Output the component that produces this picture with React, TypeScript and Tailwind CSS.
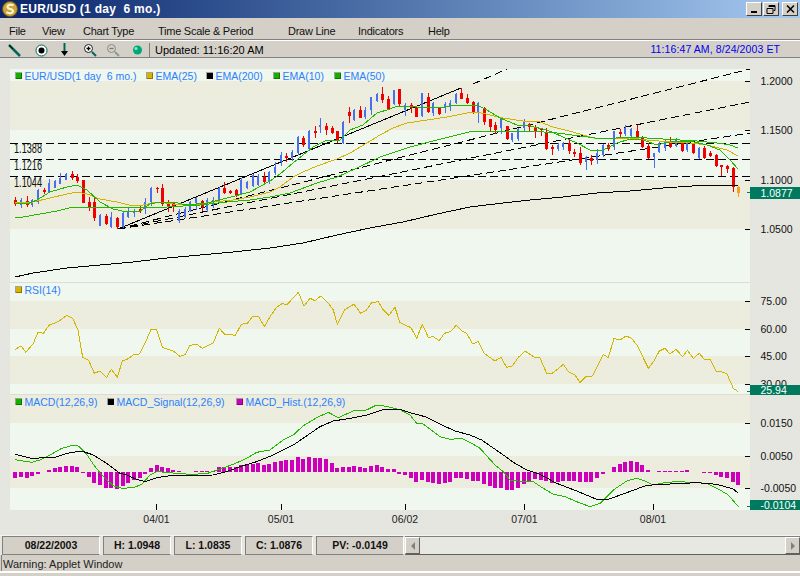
type Pt = [number, number];
type Candle = [string, number, number, number, number];

const toPoints = (pts: Pt[], ox = 0, oy = 0, div = 1) =>
  pts.map(([x, y]) => `${ox + x / div},${oy + y / div}`).join(" ");

const candleX = (i: number) => 15.3 + 5.648 * i;

const ema25: Pt[] = [[15,202],[33,202],[50,198],[67,194],[77,192],[87,194],[100,199],[117,202],[133,206],[143,205],[157,202],[173,204],[200,204],[213,202],[233,200],[250,197],[270,192],[280,187],[293,177],[303,172],[317,166],[337,159],[350,153],[367,143],[380,135],[393,128],[407,123],[427,120],[447,117],[467,113],[477,112],[490,115],[503,118],[523,121],[540,122],[553,127],[573,132],[597,139],[630,138],[647,140],[670,142],[690,143],[707,145],[727,150],[738,156]];
const ema10: Pt[] = [[15,203],[27,204],[37,200],[50,192],[67,187],[77,185],[87,190],[100,202],[113,209],[127,212],[140,211],[150,204],[160,202],[173,202],[187,205],[207,203],[227,198],[250,192],[270,181],[280,174],[293,163],[303,155],[313,147],[327,140],[340,140],[350,130],[363,125],[377,113],[390,109],[397,106],[417,107],[437,108],[457,105],[477,105],[487,110],[500,118],[517,125],[530,126],[547,130],[563,137],[577,143],[590,150],[603,150],[617,143],[630,139],[643,140],[657,145],[670,142],[690,141],[707,145],[720,150],[730,160],[738,169]];
const ema50: Pt[] = [[15,217],[23,217],[40,214],[57,211],[73,207],[100,207],[133,207],[167,207],[200,205],[227,202],[250,200],[270,197],[290,193],[317,183],[337,177],[357,168],[380,157],[410,147],[437,140],[457,135],[473,131],[503,131],[530,131],[557,133],[580,136],[603,139],[630,137],[663,139],[697,141],[717,143],[730,145],[738,148]];
const ema200: Pt[] = [[15,277],[33,273],[67,268],[100,265],[133,262],[167,258],[200,255],[233,252],[270,248],[303,243],[337,235],[370,228],[403,222],[437,214],[470,207],[503,203],[530,200],[563,197],[597,193],[630,191],[663,188],[707,185],[738,186]];

const rsiA: Pt[] = [[46,208],[63,198],[78,217],[100,190],[114,157],[130,160],[148,135],[175,125],[200,106],[218,115],[234,150],[248,232],[266,241],[283,280],[300,273],[320,292],[334,268],[352,292],[367,243],[385,236],[403,222],[418,222],[435,190],[453,148],[469,148],[487,202],[520,213],[540,229],[556,224],[570,196],[589,192],[607,205],[640,188],[658,145],[673,162],[706,166],[724,133],[742,130],[757,110],[775,108],[793,140],[810,110],[830,82],[848,70],[860,75],[895,37],[912,78],[930,55],[945,62],[962,48],[985,70],[1000,90],[1012,133],[1033,90],[1062,72],[1082,100],[1098,92],[1115,68],[1135,65],[1150,90],[1167,106],[1185,82],[1200,128]];
const rsiB: Pt[] = [[0,128],[33,143],[50,175],[67,133],[85,172],[100,170],[118,182],[133,160],[152,155],[168,136],[185,152],[200,160],[218,192],[235,184],[252,220],[285,243],[303,232],[320,262],[337,258],[355,232],[375,213],[405,233],[420,234],[440,280],[455,281],[470,270],[490,253],[505,275],[525,285],[540,307],[560,288],[577,288],[610,223],[625,233],[642,175],[660,180],[678,168],[695,175],[712,197],[745,265],[762,243],[778,213],[795,205],[810,222],[828,208],[848,230],[862,211],[880,235],[898,220],[912,237],[930,238],[948,273],[965,276],[980,280],[1000,325],[1015,335]];

const macdA: Pt[] = [[46,194],[70,198],[95,202],[120,195],[150,180],[185,160],[215,152],[235,153],[260,178],[285,215],[310,245],[340,272],[365,280],[400,278],[425,268],[450,240],[470,230],[500,232],[530,235],[570,238],[620,236],[660,222],[700,208],[740,190],[770,172],[810,165],[850,135],[880,120],[910,92],[950,68],[985,52],[1015,68],[1060,48],[1095,47],[1130,30],[1160,34],[1200,44]];
const macdB: Pt[] = [[0,44],[30,60],[50,85],[70,87],[120,125],[150,133],[185,130],[210,142],[240,160],[285,210],[310,230],[330,255],[355,258],[400,260],[430,280],[460,298],[495,305],[530,320],[570,335],[600,325],[640,285],[680,258],[710,250],[740,260],[760,270],[800,262],[830,260],[880,262],[920,265],[960,285],[985,300],[1015,335]];
const signalA: Pt[] = [[46,178],[95,190],[165,187],[200,175],[245,168],[280,180],[320,205],[360,235],[380,240],[410,253],[435,260],[470,248],[510,242],[640,240],[680,230],[720,215],[770,200],[820,180],[880,150],[960,95],[1000,78],[1050,70],[1100,60],[1145,45],[1200,42]];
const signalB: Pt[] = [[0,43],[30,53],[75,65],[130,92],[165,108],[210,120],[245,135],[310,180],[340,202],[380,225],[420,238],[470,265],[530,288],[590,313],[625,313],[680,293],[740,271],[790,268],[890,263],[950,268],[1000,282],[1015,295]];

// histogram, in thirds of a pixel from the zero line, one per candle
const hist = [-16,-14,-17,-11,-5,0,6,13,17,19,18,16,-2,-14,-32,-38,-46,-46,-50,-40,-32,-23,-18,-5,14,21,15,12,6,3,0,0,3,3,3,4,15,15,15,15,21,21,25,27,22,24,31,34,36,36,45,39,45,42,42,39,27,12,15,15,18,16,12,18,21,15,9,9,-5,-8,-16,-28,-23,-28,-32,-35,-32,-29,-18,-18,-20,-26,-26,-35,-41,-47,-47,-53,-53,-48,-35,-26,-20,-23,-26,-32,-30,-26,-26,-26,-29,-29,-29,-17,-4,0,16,25,31,34,31,22,6,0,3,4,4,4,3,6,0,0,-2,-2,-8,-13,-16,-29,-38];

const candlesA: Candle[] = [
  ["r",335,345,357,362],["b",338,345,360,368],["r",333,348,360,365],["b",342,345,360,365],["b",312,314,350,357],["r",308,315,322,328],["b",282,295,320,323],["b",285,287,308,310],["b",264,280,296,298],["b",265,267,284,286],["r",258,268,278,285],["r",267,275,288,294],["r",285,285,353,353],["r",336,352,365,378],["r",335,352,398,407],["b",388,390,422,424],["r",387,393,416,420],["b",382,395,425,428],["r",395,398,426,433],["b",382,385,425,430],["b",368,378,395,398],["b",372,378,385,395],["r",362,372,378,385],["b",340,350,372,388],["b",305,308,352,362],["r",305,308,312,325],["r",297,310,358,363],["r",345,353,365,380],["r",350,355,365,380],["b",372,378,408,415],["b",365,372,395,400],["b",348,352,378,382],["b",335,340,355,375],["r",345,348,365,378],["b",340,345,375,380],["b",336,345,360,370],["b",305,310,348,352],["r",292,308,325,328],["r",316,319,323,328],["r",312,316,330,335],["b",280,285,328,330],["b",288,290,310,312],["b",266,270,302,305],["b",268,272,300,302],["r",262,275,292,296],["b",258,262,290,298],
];
const candlesB: Candle[] = [
  ["b",305,320,340,345],["b",275,285,305,318],["r",280,288,295,305],["b",270,275,295,302],["b",228,232,280,285],["r",228,235,255,262],["b",210,213,268,272],["r",198,212,218,235],["b",175,195,200,218],["r",190,198,210,225],["r",198,205,218,222],["r",212,212,240,250],["b",183,186,248,252],["r",140,155,168,188],["b",148,150,180,183],["r",138,150,175,175],["b",142,150,172,178],["b",110,110,150,165],["b",100,102,122,125],["r",82,102,120,128],["r",108,118,150,150],["b",90,90,132,135],["r",88,88,132,140],["b",128,135,150,168],["r",128,135,145,160],["r",140,142,172,172],["b",98,100,168,172],["r",98,112,155,158],["b",125,130,160,168],["r",140,145,162,165],["b",125,132,145,158],["b",120,128,142,152],["b",100,102,130,132],["r",85,98,118,118],["r",102,115,130,132],["r",122,125,158,162],["b",125,128,160,190],["r",142,145,185,195],["r",178,178,200,212],["r",185,195,210,222],["b",170,172,205,222],["r",198,198,238,240],["b",218,220,240,245],["b",205,208,238,242],["b",178,182,205,212],["r",188,193,200,215],
];
const candlesC: Candle[] = [
  ["r",195,200,212,235],["r",205,205,210,228],["r",205,215,268,270],["r",255,262,268,285],["b",250,256,266,272],["b",245,248,262,270],["r",238,248,272,282],["r",268,275,282,290],["r",260,280,310,315],["b",288,292,305,330],["r",285,295,302,315],["b",268,280,300,312],["b",252,255,285,290],["r",250,255,268,272],["b",212,214,262,270],["r",208,215,222,235],["b",195,205,222,228],["b",205,208,228,232],["r",195,212,235,240],["r",228,230,262,265],["r",250,258,295,298],["b",278,280,290,325],["b",245,250,275,280],["b",240,245,265,272],["r",232,245,262,265],["b",235,240,258,262],["r",245,250,272,275],["b",245,250,270,275],["r",250,252,280,282],["b",260,265,295,298],["r",258,265,295,298],["r",272,278,288,290],["r",282,285,318,322],["r",315,315,320,348],["r",315,318,326,338],["r",322,323,382,395],["o",378,380,400,410],
];

const candles = [
  ...candlesA.map((c) => ({ c, oy: 85 })),
  ...candlesB.map((c) => ({ c, oy: 60 })),
  ...candlesC.map((c) => ({ c, oy: 60 })),
];

const candleColor: Record<string, string> = { r: "#f00000", b: "#4a6ef0", o: "#f4a020" };

const bands: [number, number][] = [[81,130],[180,229],[301,329],[356,384],[394,423],[456,488]];
const lights: [number, number][] = [[69,81],[130,180],[229,282],[283,301],[329,356],[384,394],[423,456],[488,510]];

const axisLabels: [string, number][] = [
  ["1.2000",81],["1.1500",130],["1.1000",180],["1.0500",229],
  ["75.00",301],["60.00",329],["45.00",356],["30.00",384],
  ["0.0150",423],["0.0050",456],["-0.0050",488],
];

const dateTicks: [string, number][] = [["04/01",156.5],["05/01",281],["06/02",405],["07/01",524.5],["08/01",653]];

const tags: [string, number, number, number][] = [["1.0877",187,12,192],["25.94",385,10,391],["-0.0104",500,10,506]];

const legends: { x: number; y: number; color: string; label: string }[] = [
  { x: 15, y: 72, color: "#14b000", label: "EUR/USD(1 day  6 mo.)" },
  { x: 146, y: 72, color: "#d8b400", label: "EMA(25)" },
  { x: 206, y: 72, color: "#000000", label: "EMA(200)" },
  { x: 273, y: 72, color: "#14b000", label: "EMA(10)" },
  { x: 334, y: 72, color: "#14b000", label: "EMA(50)" },
  { x: 15, y: 286, color: "#d8b400", label: "RSI(14)" },
  { x: 15, y: 398, color: "#14b000", label: "MACD(12,26,9)" },
  { x: 107, y: 398, color: "#000000", label: "MACD_Signal(12,26,9)" },
  { x: 236, y: 398, color: "#cc00bb", label: "MACD_Hist.(12,26,9)" },
];

const fan: [number, number, number, number][] = [
  [473,84,507,69],
  [118,229,750,69],
  [118,229,750,102],
  [118,229,750,133],
];

function Chart() {
  return (
    <svg width={800} height={477} viewBox="0 58 800 477" className="block" xmlSpace="preserve">
      <defs>
        <pattern id="tan" width={2} height={2} patternUnits="userSpaceOnUse">
          <rect width={2} height={2} fill="#eeeee0" />
          <rect width={1} height={1} fill="#ebebdc" />
          <rect x={1} y={1} width={1} height={1} fill="#ebebdc" />
        </pattern>
        <pattern id="gutter" width={2} height={2} patternUnits="userSpaceOnUse">
          <rect width={2} height={2} fill="#e8e8e3" />
          <rect width={1} height={1} fill="#e3e3dd" />
          <rect x={1} y={1} width={1} height={1} fill="#e3e3dd" />
        </pattern>
      </defs>
      <rect x={0} y={58} width={800} height={477} fill="url(#gutter)" />
      <g shapeRendering="crispEdges">
        {lights.map(([a, b]) => (
          <rect key={a} x={10} y={a} width={740} height={b - a} fill="#f0f7ee" />
        ))}
        {bands.map(([a, b]) => (
          <rect key={a} x={10} y={a} width={740} height={b - a} fill="url(#tan)" />
        ))}
        <rect x={10} y={282} width={740} height={1} fill="#dcdcd8" />
        <rect x={10} y={394} width={740} height={1} fill="#dcdcd8" />
        {axisLabels.map(([, y]) => (
          <rect key={y} x={745} y={y} width={5} height={1} fill="#000" />
        ))}
        {dateTicks.map(([d, x]) => (
          <rect key={d} x={Math.floor(x)} y={504} width={1} height={6} fill="#000" />
        ))}
      </g>

      {hist.map((h, i) =>
        h === 0 ? null : (
          <rect
            key={i}
            x={Math.round(candleX(i)) - 2}
            y={h > 0 ? 472.3 - h / 3 : 472.3}
            width={4}
            height={Math.abs(h) / 3}
            fill="#cc00bb"
            shapeRendering="crispEdges"
          />
        ),
      )}

      <g fill="none" stroke="#000" strokeWidth={1} shapeRendering="crispEdges">
        {[143, 159.5, 176.5].map((y) => (
          <line key={y} x1={10} y1={y} x2={750} y2={y} strokeDasharray="8 4" />
        ))}
        {fan.map(([x1, y1, x2, y2]) => (
          <line key={`${x2}-${y2}`} x1={x1} y1={y1} x2={x2} y2={y2} strokeDasharray="8 4" />
        ))}
        <line x1={118} y1={229} x2={461} y2={88} />
      </g>

      <g fontSize={14} fill="#111">
        <text x={14} y={153} textLength={28} lengthAdjust="spacingAndGlyphs">1.1388</text>
        <text x={14} y={170} textLength={28} lengthAdjust="spacingAndGlyphs">1.1216</text>
        <text x={14} y={187} textLength={28} lengthAdjust="spacingAndGlyphs">1.1044</text>
      </g>

      {candles.map(({ c: [k, wt, bt, bb, wb], oy }, i) => {
        const x = Math.round(candleX(i));
        const w = k === "b" ? 2 : 3;
        return (
          <g key={i} fill={candleColor[k]} shapeRendering="crispEdges">
            <rect x={x} y={oy + wt / 3} width={1} height={(wb - wt) / 3} />
            <rect x={x - 1} y={oy + bt / 3} width={w} height={(bb - bt) / 3} />
          </g>
        );
      })}

      <g fill="none" strokeLinejoin="round" strokeWidth={1} shapeRendering="crispEdges">
        <polyline points={toPoints(ema200)} stroke="#000" />
        <polyline points={toPoints(ema25)} stroke="#d4b000" />
        <polyline points={toPoints(ema50)} stroke="#22b800" />
        <polyline points={toPoints(ema10)} stroke="#22b800" />
        <polyline points={toPoints(rsiA, 0, 280, 3)} stroke="#d0b400" />
        <polyline points={toPoints(rsiB, 400, 280, 3)} stroke="#d0b400" />
        <polyline points={toPoints(macdA, 0, 395, 3)} stroke="#22b800" />
        <polyline points={toPoints(macdB, 400, 395, 3)} stroke="#22b800" />
        <polyline points={toPoints(signalA, 0, 395, 3)} stroke="#000" />
        <polyline points={toPoints(signalB, 400, 395, 3)} stroke="#000" />
      </g>

      <g fontSize={10.5} fill="#111">
        {axisLabels.map(([t, y]) => (
          <text key={t} x={760.5} y={y + 4}>{t}</text>
        ))}
        {dateTicks.map(([d, x]) => (
          <text key={d} x={x} y={523} textAnchor="middle" fill="#222">{d}</text>
        ))}
      </g>

      {tags.map(([t, y, h, tick]) => (
        <g key={t}>
          <rect x={747} y={tick} width={3} height={1} fill="#007a5e" shapeRendering="crispEdges" />
          <rect x={750} y={y} width={50} height={h} fill="#007a5e" shapeRendering="crispEdges" />
          <text x={760.5} y={y + h / 2 + 4} fontSize={10.5} fill="#fff">{t}</text>
        </g>
      ))}

      {legends.map((l) => (
        <g key={l.label}>
          <rect x={l.x + 0.5} y={l.y + 0.5} width={6} height={6} fill={l.color} stroke="#00000055" shapeRendering="crispEdges" />
          <text x={l.x + 9.5} y={l.y + 7.5} fontSize={10.5} fill="#2a80ff" style={{ whiteSpace: "pre" }}>{l.label}</text>
        </g>
      ))}
    </svg>
  );
}

function WinButton({ children }: { children: React.ReactNode }) {
  return (
    <div className="w-4 h-[14px] bg-[#d4d0c8] border border-t-white border-l-white border-r-[#404040] border-b-[#404040] flex items-center justify-center">
      {children}
    </div>
  );
}

function Logo() {
  return (
    <svg width={16} height={16} viewBox="0 0 16 16">
      <circle cx={8} cy={8} r={7.5} fill="#caa63c" stroke="#6a5418" strokeWidth={1} />
      <path d="M11.5 4.5c-2-1.500-6-1-6 1.500s5.500 1.500 5.500 4-4 2.800-6.500 1.200" fill="none" stroke="#fff6d0" strokeWidth={2} />
    </svg>
  );
}

function ToolIcon({ className, children }: { className?: string; children: React.ReactNode }) {
  return <div className={`w-[17px] h-[17px] flex items-center justify-center ${className ?? ""}`}>{children}</div>;
}

const menuItems: [string, string][] = [
  ["File", "w-[33px]"],
  ["View", "w-[41px]"],
  ["Chart Type", "w-[75px]"],
  ["Time Scale & Period", "w-[130px]"],
  ["Draw Line", "w-[70px]"],
  ["Indicators", "w-[70px]"],
  ["Help", "w-[40px]"],
];

const statusCells: [string, string][] = [
  ["08/22/2003", "w-[98px]"],
  ["H: 1.0948", "w-[68px]"],
  ["L: 1.0835", "w-[68px]"],
  ["C: 1.0876", "w-[68px]"],
  ["PV: -0.0149", "w-[88px]"],
];

export default function App() {
  return (
    <div className="w-[800px] h-[576px] overflow-hidden flex flex-col bg-[#d4d0c8] text-black font-['Liberation_Sans',Arial,sans-serif]">
      {/* title bar */}
      <div className="h-[18px] shrink-0 flex items-center bg-gradient-to-r from-[#0a246a] to-[#a6caf0] px-[2px]">
        <Logo />
        <span className="ml-[2px] text-white font-bold text-[12px] tracking-[0.3px] whitespace-pre">EUR/USD (1 day  6 mo.)</span>
        <div className="ml-auto flex items-center gap-[1px]">
          <WinButton><div className="w-[6px] h-[2px] bg-black mt-[6px] mr-[1px]" /></WinButton>
          <WinButton>
            <svg width={10} height={9} viewBox="0 0 10 9" fill="none" stroke="#000">
              <path d="M3 2V.5h6v5H7.500M1 3.500h6v5H1zM1 3.500h6" />
              <path d="M3 1.500h6" />
            </svg>
          </WinButton>
          <div className="w-[1px]" />
          <WinButton>
            <svg width={9} height={8} viewBox="0 0 9 8" stroke="#000" strokeWidth={1.500}>
              <path d="M1 .5l7 7M8 .5l-7 7" />
            </svg>
          </WinButton>
        </div>
      </div>

      {/* menu */}
      <div className="h-[21px] shrink-0 flex items-center pl-[9px] pt-[5px] text-[11px] tracking-[-0.25px] text-[#111]">
        {menuItems.map(([m, w]) => (
          <span key={m} className={`${w} whitespace-nowrap`}>{m}</span>
        ))}
      </div>
      <div className="h-px shrink-0 bg-[#808080]" />
      <div className="h-px shrink-0 bg-white" />

      {/* toolbar */}
      <div className="h-[16px] shrink-0 flex items-center pl-[6px] pr-[20px] pt-[2px] text-[11px]">
        <ToolIcon>
          <svg width={13} height={13} viewBox="0 0 13 13"><path d="M1 1l11 11" stroke="#006858" strokeWidth={2.500} /><path d="M1 1l4 4" stroke="#000" strokeWidth={1} /></svg>
        </ToolIcon>
        <ToolIcon className="ml-[10px]">
          <svg width={13} height={13} viewBox="0 0 13 13"><circle cx={6.500} cy={6.500} r={5.500} fill="#fff" stroke="#006858" /><circle cx={6.500} cy={6.500} r={3} fill="#000" /></svg>
        </ToolIcon>
        <ToolIcon className="ml-[6px]">
          <svg width={9} height={14} viewBox="0 0 9 14"><path d="M3.500 0h2v9h-2z" fill="#006858" /><path d="M1 8h7l-3.500 5z" fill="#000" /></svg>
        </ToolIcon>
        <ToolIcon className="ml-[8px]">
          <svg width={14} height={14} viewBox="0 0 14 14" fill="none"><circle cx={5.500} cy={5.500} r={4} fill="#fff" stroke="#222" /><path d="M3.500 5.500h4M5.500 3.500v4" stroke="#000" strokeWidth={1.300} /><path d="M9 9l4 4" stroke="#006858" strokeWidth={2} /></svg>
        </ToolIcon>
        <ToolIcon className="ml-[6px]">
          <svg width={14} height={14} viewBox="0 0 14 14" fill="none"><circle cx={5.500} cy={5.500} r={4} stroke="#8a8a84" /><path d="M3.500 5.500h4" stroke="#777" strokeWidth={1.300} /><path d="M9 9l4 4" stroke="#8a9a94" strokeWidth={2} /></svg>
        </ToolIcon>
        <ToolIcon className="ml-[8px]">
          <svg width={11} height={11} viewBox="0 0 11 11"><circle cx={5.500} cy={5} r={4.500} fill="#00a878" /><circle cx={4} cy={3.500} r={1.500} fill="#8fe8c8" /></svg>
        </ToolIcon>
        <div className="w-px h-[14px] bg-[#808080] ml-[3px] mr-[5px]" />
        <span>Updated: 11:16:20 AM</span>
        <span className="ml-auto text-[#0000f0] text-[10.5px] tracking-[0.1px]">11:16:47 AM, 8/24/2003 ET</span>
      </div>
      <div className="h-px shrink-0 bg-[#808080]" />

      <Chart />

      {/* status row */}
      <div className="h-[20px] shrink-0 flex pl-[2px] bg-[#e6e6e0] border-t border-[#f4f4f0]">
        {statusCells.map(([t, w]) => (
          <div
            key={t}
            className={`${w} mr-[3px] pt-[1px] bg-[#d4d0c8] border border-t-[#808080] border-l-[#808080] border-r-white border-b-[#808080] flex items-center justify-center font-bold text-[10.5px] text-[#111]`}
          >
            {t}
          </div>
        ))}
        <div className="flex-1 -ml-[2px] flex items-stretch bg-[#e8e8e2] border-t border-b border-t-[#808080] border-b-[#606060]">
          <div className="w-[15px] bg-[#d4d0c8] border border-t-white border-l-white border-r-[#606060] border-b-[#606060] flex items-center justify-center">
            <div className="w-0 h-0 border-y-[4px] border-y-transparent border-r-[4px] border-r-[#808080]" />
          </div>
          <div className="flex-1" />
          <div className="w-[15px] bg-[#d4d0c8] border border-t-white border-l-white border-r-[#606060] border-b-[#606060] flex items-center justify-center">
            <div className="w-0 h-0 border-y-[4px] border-y-transparent border-l-[4px] border-l-[#808080]" />
          </div>
        </div>
      </div>

      {/* applet warning */}
      <div className="h-[16px] shrink-0 flex items-center pl-[1px] pt-[2px] ml-[1px] text-[11px] text-[#222] border-l border-[#808080]">
        Warning: Applet Window
      </div>
      <div className="h-[2px] shrink-0 bg-white" />
    </div>
  );
}
